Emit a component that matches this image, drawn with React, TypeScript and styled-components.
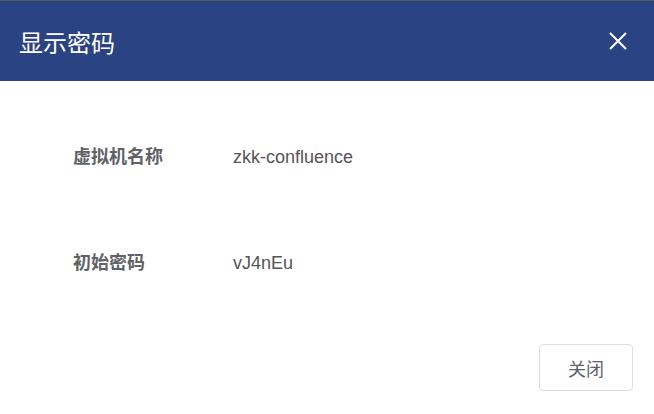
import styled, { createGlobalStyle } from 'styled-components';

const GlobalStyle = createGlobalStyle`
  html, body {
    margin: 0;
    padding: 0;
    background: #fff;
    font-family: "Liberation Sans", "Noto Sans CJK SC", sans-serif;
  }
`;

const Dialog = styled.div`
  width: 654px;
  height: 414px;
  display: flex;
  flex-direction: column;
  background: #fff;
  border-top: 1px solid #5a5a5a;
  box-sizing: border-box;
`;

const Header = styled.div`
  height: 80px;
  background: #2a4483;
  display: flex;
  align-items: center;
  justify-content: space-between;
  padding: 0 26px 0 19px;
`;

const Title = styled.h2`
  margin: 0;
  color: #fff;
  font-size: 24px;
  font-weight: normal;
`;

const CloseButton = styled.button`
  background: none;
  border: none;
  padding: 0;
  width: 20px;
  height: 20px;
  display: flex;
  cursor: pointer;
`;

const Body = styled.div`
  padding: 61px 0 0 73px;
  display: flex;
  flex-direction: column;
  gap: 74px;
`;

const Row = styled.div`
  display: flex;
  align-items: baseline;
  height: 32px;
  font-size: 18px;
`;

const Label = styled.span`
  width: 160px;
  color: #606266;
  font-weight: bold;
`;

const Value = styled.span`
  color: #555;
`;

const Footer = styled.div`
  margin-top: auto;
  display: flex;
  justify-content: flex-end;
  padding: 0 21px 23px 0;
`;

const Button = styled.button`
  width: 94px;
  height: 47px;
  background: #fff;
  border: 1px solid #dcdfe6;
  border-radius: 4px;
  color: #606266;
  font-size: 18px;
  font-family: inherit;
  cursor: pointer;
`;

export default function App() {
  return (
    <>
      <GlobalStyle />
      <Dialog>
        <Header>
          <Title>显示密码</Title>
          <CloseButton aria-label="close">
            <svg width="20" height="20" viewBox="0 0 20 20">
              <path d="M2 2 L18 18 M18 2 L2 18" stroke="#fff" strokeWidth="2" />
            </svg>
          </CloseButton>
        </Header>
        <Body>
          <Row>
            <Label>虚拟机名称</Label>
            <Value>zkk-confluence</Value>
          </Row>
          <Row>
            <Label>初始密码</Label>
            <Value>vJ4nEu</Value>
          </Row>
        </Body>
        <Footer>
          <Button>关闭</Button>
        </Footer>
      </Dialog>
    </>
  );
}
